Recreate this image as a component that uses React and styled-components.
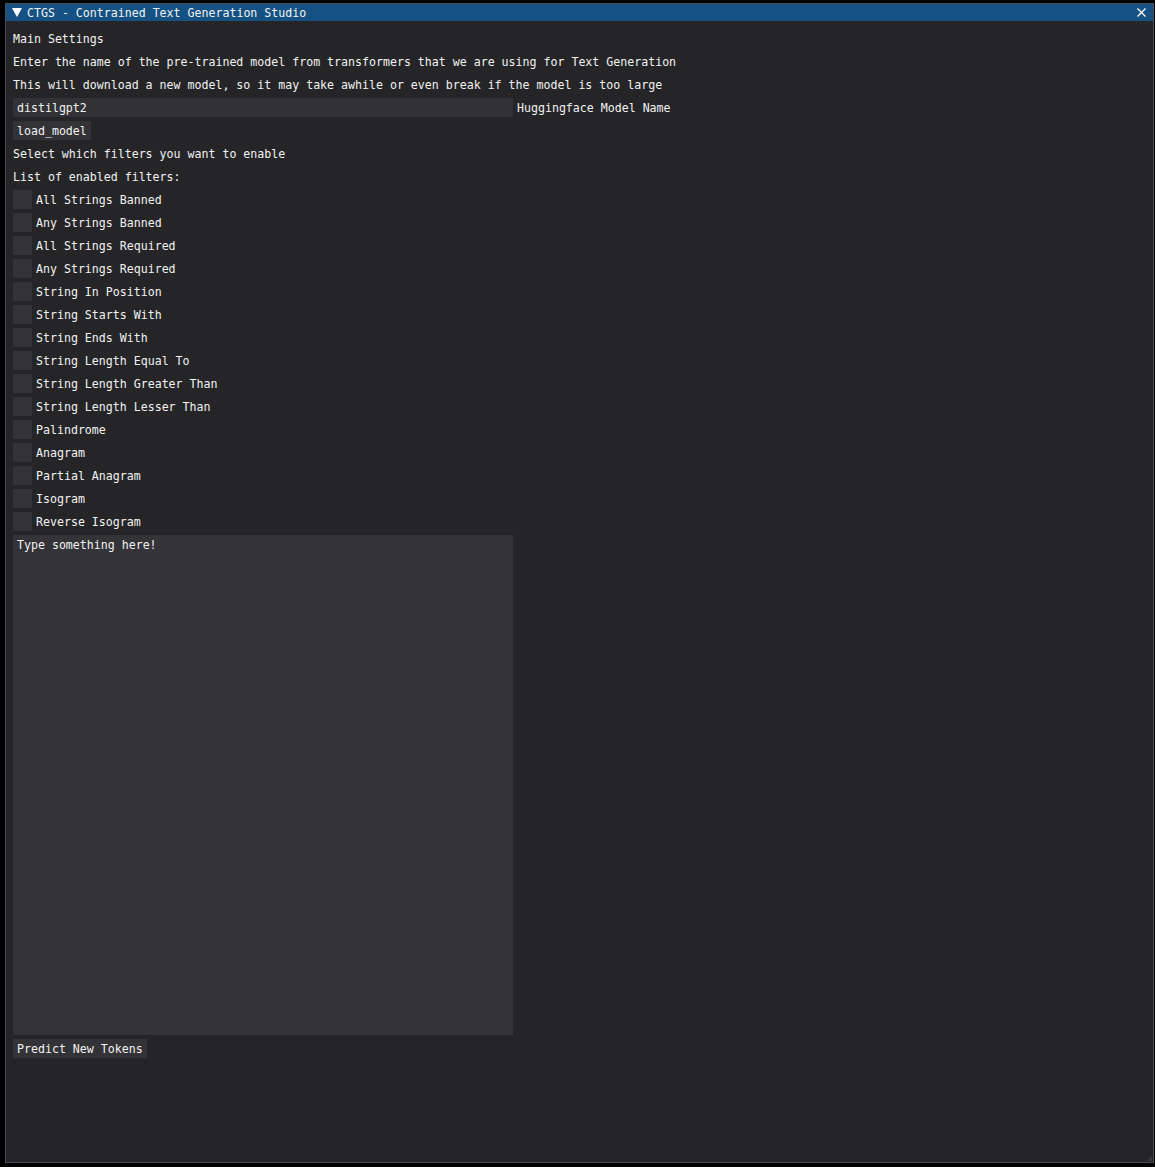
import styled, { createGlobalStyle } from "styled-components";

const filters = [
  "All Strings Banned",
  "Any Strings Banned",
  "All Strings Required",
  "Any Strings Required",
  "String In Position",
  "String Starts With",
  "String Ends With",
  "String Length Equal To",
  "String Length Greater Than",
  "String Length Lesser Than",
  "Palindrome",
  "Anagram",
  "Partial Anagram",
  "Isogram",
  "Reverse Isogram",
];

function App() {
  return (
    <>
      <GlobalStyle />
      <Window>
        <TitleBar>
          <Collapse>
            <svg width="10" height="9" viewBox="0 0 10 9">
              <polygon points="0,0 10,0 5,9" fill="#ffffff" />
            </svg>
          </Collapse>
          <TitleText>CTGS - Contrained Text Generation Studio</TitleText>
          <Close>
            <svg width="9" height="9" viewBox="0 0 9 9">
              <path d="M0.5 0.5 L8.5 8.5 M8.5 0.5 L0.5 8.5" stroke="#ffffff" strokeWidth="1.3" />
            </svg>
          </Close>
        </TitleBar>
        <Content>
          <Row><Label>Main Settings</Label></Row>
          <Row><Label>Enter the name of the pre-trained model from transformers that we are using for Text Generation</Label></Row>
          <Row><Label>This will download a new model, so it may take awhile or even break if the model is too large</Label></Row>
          <Row>
            <Input>distilgpt2</Input>
            <Label>Huggingface Model Name</Label>
          </Row>
          <Row><Button>load_model</Button></Row>
          <Row><Label>Select which filters you want to enable</Label></Row>
          <Row><Label>List of enabled filters:</Label></Row>
          {filters.map((f) => (
            <Row key={f}>
              <CheckBox />
              <Label>{f}</Label>
            </Row>
          ))}
          <TextArea>Type something here!</TextArea>
          <Row><Button>Predict New Tokens</Button></Row>
        </Content>
        <Grip />
      </Window>
    </>
  );
}

const GlobalStyle = createGlobalStyle`
  html, body {
    margin: 0;
    background: #000000;
  }
  body {
    padding: 3px 0 0 5px;
    font-family: "DejaVu Sans Mono", "Liberation Mono", monospace;
    font-size: 11.6px;
    color: #f2f2f2;
  }
`;

const Window = styled.div`
  position: relative;
  width: 1149px;
  height: 1160px;
  box-sizing: border-box;
  background: #252528;
  border: 1px solid #4e4e58;
  display: flex;
  flex-direction: column;
`;

const TitleBar = styled.div`
  height: 17px;
  background: #155283;
  display: flex;
  align-items: center;
  padding: 0 4px 0 5px;
  flex-shrink: 0;
`;

const Collapse = styled.div`
  width: 12px;
  height: 12px;
  display: flex;
  align-items: center;
  justify-content: center;
  margin-right: 4px;
`;

const TitleText = styled.div`
  flex: 1;
  padding-top: 1px;
  line-height: 16px;
`;

const Close = styled.div`
  width: 13px;
  height: 13px;
  display: flex;
  align-items: center;
  justify-content: center;
  margin-right: 1px;
`;

const Content = styled.div`
  padding: 8px 7px;
  display: flex;
  flex-direction: column;
  gap: 4px;
`;

const Row = styled.div`
  display: flex;
  align-items: center;
  height: 19px;
  gap: 4px;
`;

const Label = styled.span`
  white-space: pre;
  height: 19px;
  box-sizing: border-box;
  padding-top: 2px;
  line-height: 17px;
`;

const Input = styled.div`
  width: 500px;
  height: 19px;
  box-sizing: border-box;
  padding: 2px 4px 0;
  line-height: 17px;
  background: #323236;
`;

const Button = styled.div`
  height: 19px;
  box-sizing: border-box;
  padding: 2px 4px 0;
  line-height: 17px;
  background: #333337;
`;

const CheckBox = styled.div`
  width: 19px;
  height: 19px;
  background: #333337;
`;

const TextArea = styled.div`
  width: 500px;
  height: 500px;
  box-sizing: border-box;
  padding: 4px 4px;
  line-height: 13px;
  background: #333338;
`;

const Grip = styled.div`
  position: absolute;
  right: 1px;
  bottom: 1px;
  width: 0;
  height: 0;
  border-left: 5px solid transparent;
  border-bottom: 5px solid #3a3a44;
`;

export default App;
